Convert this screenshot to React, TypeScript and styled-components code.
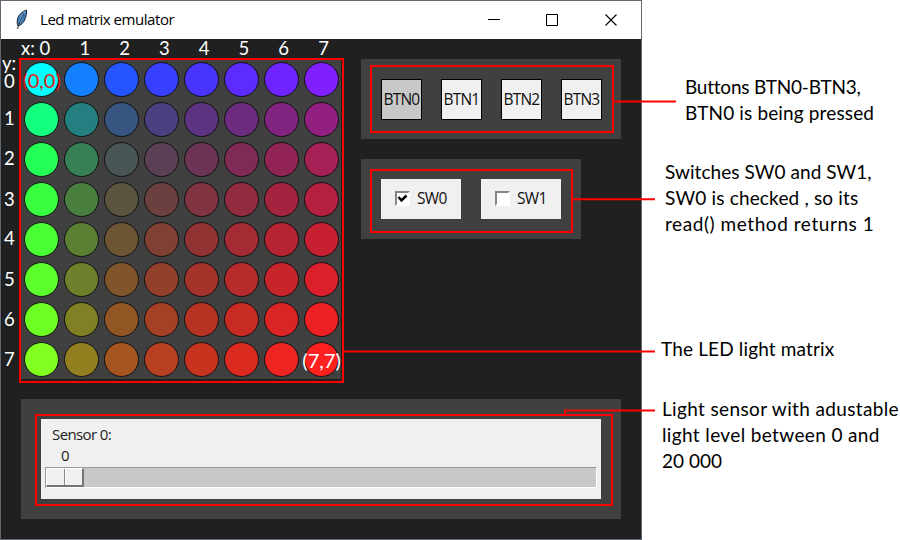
import React from "react";
import styled, { createGlobalStyle } from "styled-components";

const GlobalStyle = createGlobalStyle`
  * { box-sizing: border-box; }
  body { margin: 0; background: #fff; overflow: hidden; }
`;

const noteFont = `Lato, "Liberation Sans", sans-serif`;
const uiFont = `"Open Sans", "Noto Sans", sans-serif`;

const Page = styled.main`
  position: relative;
  display: flex;
  width: 900px;
  height: 540px;
  background: #fff;
`;

const Window = styled.section`
  display: flex;
  flex-direction: column;
  width: 642px;
  height: 540px;
  border: 1px solid #5f6873;
  background: #202020;
  flex: none;
`;

const TitleBar = styled.header`
  display: flex;
  align-items: center;
  height: 38px;
  background: #fff;
  padding-left: 13px;
  flex: none;
`;

const Title = styled.h1`
  flex: 1;
  margin: 0 0 0 10px;
  font: 400 15px/36px ${uiFont};
  height: 38px;
  letter-spacing: -0.45px;
  color: #000;
`;

const WindowButtons = styled.div`
  display: flex;
  width: 175px;
  gap: 46.5px;
  padding-left: 21.5px;
`;

const Body = styled.div`
  display: grid;
  grid-template-columns: 20px 320px 260px;
  grid-template-rows: 20px 320px 120px;
  flex: 1;
`;

const XAxis = styled.div`
  grid-column: 2;
  display: flex;
`;

const XLabel = styled.span`
  flex: 0 0 39.8px;
  display: flex;
  justify-content: flex-end;
  padding-right: 13px;
  white-space: pre;
  font: 400 18.5px/18px ${noteFont};
  color: #fff;
`;

const YAxis = styled.div`
  grid-column: 1;
  grid-row: 2;
  display: grid;
  grid-auto-rows: 40px;
  align-items: center;
  padding-left: 3px;
  font: 400 18.5px/20px ${noteFont};
  color: #fff;
`;

const YLabel = styled.span<{ $drop?: number }>`
  position: relative;
  top: ${(p) => p.$drop ?? 0}px;
`;

const YName = styled.span`
  position: absolute;
  left: -2px;
  top: -15px;
  line-height: 14px;
`;

const Matrix = styled.div`
  position: relative;
  grid-column: 2;
  grid-row: 2;
  display: grid;
  grid-template: repeat(8, 40px) / repeat(8, 40px);
  place-items: start;
  background: #404040;
  padding: 3px 0 0 3px;
`;

const Led = styled.div<{ $color: string }>`
  position: relative;
  display: flex;
  align-items: center;
  justify-content: center;
  width: 35px;
  height: 35px;
  border: 1px solid #111;
  border-radius: 50%;
  background: ${(p) => p.$color};
`;

const LedNote = styled.span<{ $color: string }>`
  position: relative;
  z-index: 2;
  font: 400 20px/20px ${noteFont};
  color: ${(p) => p.$color};
`;

const Side = styled.div`
  grid-column: 3;
  grid-row: 2;
  display: flex;
  flex-direction: column;
  align-items: flex-start;
  gap: 20px;
  margin-left: 20px;
`;

const Panel = styled.div<{ $width: number }>`
  position: relative;
  display: flex;
  gap: 20px;
  align-items: flex-start;
  width: ${(p) => p.$width}px;
  height: 80px;
  padding: 20px;
  background: #404040;
`;

const Highlight = styled.div<{ $inset: string }>`
  position: absolute;
  inset: ${(p) => p.$inset};
  border: 2px solid #f00;
  pointer-events: none;
`;

const PushButton = styled.button<{ $pressed?: boolean }>`
  width: 41px;
  height: 41px;
  margin-right: -1px;
  padding: 0 0 1px;
  border: 1px solid #000;
  border-radius: 0;
  background: ${(p) => (p.$pressed ? "#c8c8c8" : "#f0f0f0")};
  font: 400 15.500px/38px ${uiFont};
  letter-spacing: -0.8px;
  color: #111;
`;

const Switch = styled.label`
  display: flex;
  align-items: center;
  width: 80px;
  height: 40px;
  padding: 0 0 2px 14px;
  gap: 7px;
  background: #f0f0f0;
  font: 400 15.500px/38px ${uiFont};
  letter-spacing: -0.7px;
  color: #111;
`;

const CheckBox = styled.span`
  display: flex;
  width: 15px;
  height: 15px;
  border: 2px solid;
  border-color: #858585 #fff #fff #858585;
  background: #fff;
`;

const SensorArea = styled.div`
  position: relative;
  grid-column: 1 / 4;
  grid-row: 3;
  width: 600px;
  height: 120px;
  margin: 20px 0 0 20px;
  padding: 20px;
  background: #404040;
`;

const Sensor = styled.div`
  display: flex;
  flex-direction: column;
  width: 560px;
  height: 80px;
  padding: 5px 4px 0;
  background: #f0f0f0;
  font: 400 15px/21px ${uiFont};
  letter-spacing: -0.6px;
  color: #222;
`;

const SensorText = styled.span<{ $indent: number }>`
  height: 21px;
  padding-left: ${(p) => p.$indent}px;
`;

const Trough = styled.div`
  display: flex;
  width: 552px;
  height: 21px;
  margin-top: 1px;
  border: 1px solid;
  border-color: #999 #fff #fff #999;
  background: #c8c8c8;
`;

const Thumb = styled.div`
  display: flex;
  width: 38px;
  height: 19px;
  border: solid;
  border-width: 1px 2px 2px 1px;
  border-color: #fff #757575 #757575 #fff;
  background: #f0f0f0;
`;

const ThumbHalf = styled.i`
  flex: 1;
  &:first-child { border-right: 1px solid #888; }
  &:last-child { border-left: 1px solid #fff; }
`;

const Notes = styled.aside`
  flex: 1;
  white-space: nowrap;
  font: 400 19px/26px ${noteFont};
  color: #000;
`;

const Note = styled.p<{ $gap: number; $indent: number }>`
  margin: 0;
  padding-top: ${(p) => p.$gap}px;
  padding-left: ${(p) => p.$indent}px;
`;

const Line = styled.span<{ $track: number }>`
  display: block;
  letter-spacing: ${(p) => p.$track}px;
`;

const Connectors = styled.svg`
  position: absolute;
  inset: 0;
  pointer-events: none;
`;

const range = [0, 1, 2, 3, 4, 5, 6, 7];

const ledColor = (x: number, y: number) =>
  `rgb(${Math.round(((x + y) * 255) / 14)}, ${Math.round(255 / (x + 1))}, ${Math.round(255 / (y + 1))})`;

const yDrops = [2, -1, -1, 0, -1, 0, 0, 0];

const notes = [
  { gap: 74, indent: 43, lines: [["Buttons BTN0-BTN3,", -0.22], ["BTN0 is being pressed", 0.14]] },
  { gap: 33, indent: 23, lines: [["Switches SW0 and SW1,", 0.05], ["SW0 is checked , so its", 0.17], ["read() method returns 1", 0.56]] },
  { gap: 99, indent: 19, lines: [["The LED light matrix", 0.15]] },
  { gap: 34, indent: 20, lines: [["Light sensor with adustable", 0.36], ["light level between 0 and", 0.37], ["20 000", 0]] },
] as { gap: number; indent: number; lines: [string, number][] }[];

const Feather = () => (
  <svg width="16" height="22" viewBox="0 0 16 22">
    <path d="M12.500 1C8 2.500 4.500 6 3.500 10C3 13 3 15 4 17C8 16 11 12 12 7C12.500 5 12.800 3 12.500 1Z" fill="#397cba" stroke="#222a35" />
    <path d="M11 3C8 5 6.500 9 5.500 14" fill="none" stroke="#8fc5f2" strokeWidth="1.500" />
    <path d="M10 4C7 9 5 14 3.500 20" fill="none" stroke="#333" />
  </svg>
);

export default function App() {
  return (
    <Page>
      <GlobalStyle />
      <Window>
        <TitleBar>
          <Feather />
          <Title>Led matrix emulator</Title>
          <WindowButtons>
            <svg width="12" height="12"><path d="M0 5.500H12" stroke="#000" /></svg>
            <svg width="12" height="12"><path d="M.5.5H11.500V11.500H.5Z" fill="none" stroke="#000" /></svg>
            <svg width="12" height="12"><path d="M.5.5L11.500 11.500M11.500.5L.5 11.500" stroke="#000" strokeWidth="1.100" /></svg>
          </WindowButtons>
        </TitleBar>
        <Body>
          <XAxis>
            {range.map((x) => <XLabel key={x}>{x === 0 ? "x: 0" : x}</XLabel>)}
          </XAxis>
          <YAxis>
            {range.map((y) => (
              <YLabel key={y} $drop={yDrops[y]}>
                {y === 0 && <YName>y:</YName>}
                {y}
              </YLabel>
            ))}
          </YAxis>
          <Matrix>
            {range.map((y) =>
              range.map((x) => (
                <Led key={`${x}-${y}`} $color={ledColor(x, y)}>
                  {x + y === 0 && <LedNote $color="#e01818">(0,0)</LedNote>}
                  {x + y === 14 && <LedNote $color="#fff">(7,7)</LedNote>}
                </Led>
              )),
            )}
            <Highlight $inset="-1px -3px -4px -2px" />
          </Matrix>
          <Side>
            <Panel $width={260}>
              <PushButton $pressed>BTN0</PushButton>
              <PushButton>BTN1</PushButton>
              <PushButton>BTN2</PushButton>
              <PushButton>BTN3</PushButton>
              <Highlight $inset="6px 7px 6px 9px" />
            </Panel>
            <Panel $width={220}>
              <Switch>
                <CheckBox>
                  <svg width="11" height="11"><path d="M1.500 4L4.500 7.500L9.500 2.500" fill="none" stroke="#000" strokeWidth="2.500" /></svg>
                </CheckBox>
                SW0
              </Switch>
              <Switch><CheckBox />SW1</Switch>
              <Highlight $inset="10px 8px 6px 9px" />
            </Panel>
          </Side>
          <SensorArea>
            <Sensor>
              <SensorText $indent={7}>Sensor 0:</SensorText>
              <SensorText $indent={16}>0</SensorText>
              <Trough><Thumb><ThumbHalf /><ThumbHalf /></Thumb></Trough>
            </Sensor>
            <Highlight $inset="15px 8px 13px 14px" />
          </SensorArea>
        </Body>
      </Window>
      <Notes>
        {notes.map((n) => (
          <Note key={n.lines[0][0]} $gap={n.gap} $indent={n.indent}>
            {n.lines.map(([text, track]) => <Line key={text} $track={track}>{text}</Line>)}
          </Note>
        ))}
      </Notes>
      <Connectors width="900" height="540" fill="none" stroke="#f00" strokeWidth="2">
        <path d="M614 101.500H676M573 199.300H655M344 351.400H655M565 414V410.500H655" />
      </Connectors>
    </Page>
  );
}
